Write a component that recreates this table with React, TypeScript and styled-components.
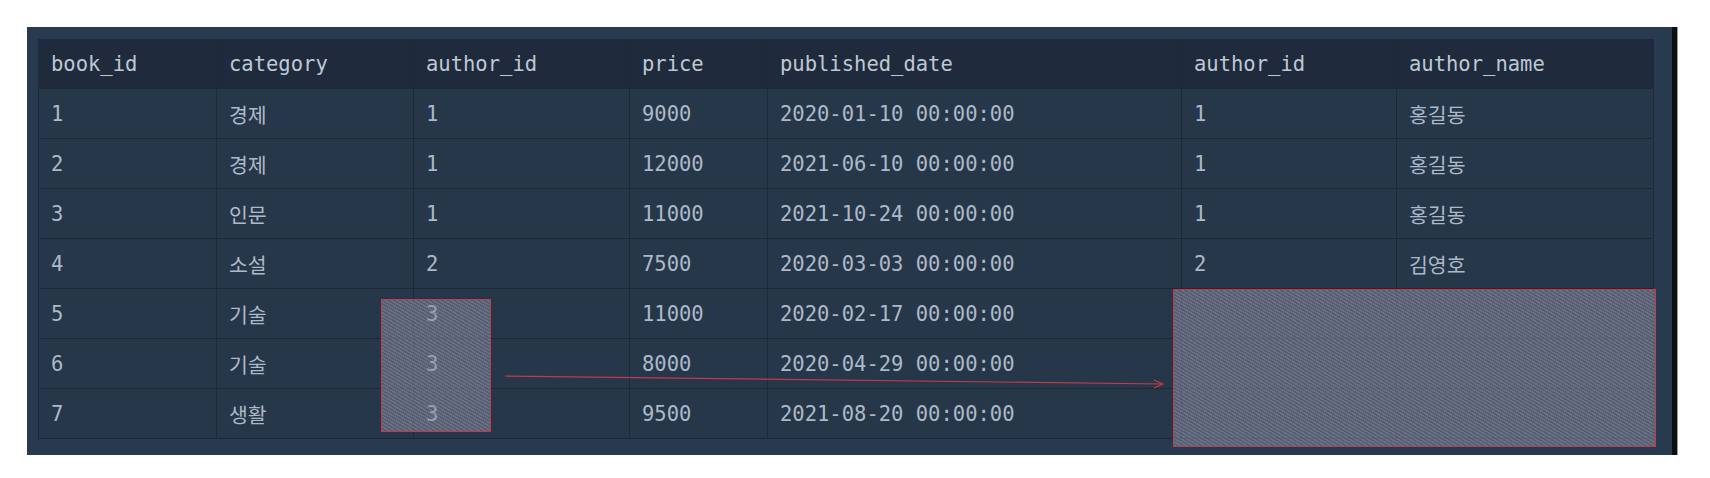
import React from 'react'
import styled, { createGlobalStyle } from 'styled-components'

const GlobalStyle = createGlobalStyle`
  html, body {
    margin: 0;
    background: #ffffff;
  }
`

const Columns = ['book_id', 'category', 'author_id', 'price', 'published_date', 'author_id', 'author_name']
const Widths = '178px 197px 216px 138px 414px 215px 257px'

const Rows = [
  ['1', '경제', '1', '9000', '2020-01-10 00:00:00', '1', '홍길동'],
  ['2', '경제', '1', '12000', '2021-06-10 00:00:00', '1', '홍길동'],
  ['3', '인문', '1', '11000', '2021-10-24 00:00:00', '1', '홍길동'],
  ['4', '소설', '2', '7500', '2020-03-03 00:00:00', '2', '김영호'],
  ['5', '기술', '3', '11000', '2020-02-17 00:00:00', '', ''],
  ['6', '기술', '3', '8000', '2020-04-29 00:00:00', '', ''],
  ['7', '생활', '3', '9500', '2021-08-20 00:00:00', '', ''],
]

const App = () => {
  return (
    <Page>
      <GlobalStyle />
      <Panel>
        <Table>
          <Row $head>
            {Columns.map((c, i) => (
              <Cell key={i} $head>{c}</Cell>
            ))}
          </Row>
          {Rows.map((r, i) => (
            <Row key={i}>
              {r.map((v, j) => (
                <Cell key={j}>{v}</Cell>
              ))}
            </Row>
          ))}
        </Table>

        <Highlight $left={354} $top={272} $width={110} $height={133} />
        <Highlight $left={1146} $top={262} $width={483} $height={158} />

        <Arrow width="670" height="20" viewBox="0 0 670 20">
          <line x1="1" y1="3" x2="658" y2="11" stroke="#c43a4c" strokeWidth="1.2" />
          <polyline points="650,7 659,11 650,15" fill="none" stroke="#c43a4c" strokeWidth="1.2" />
        </Arrow>
      </Panel>
    </Page>
  )
}

export default App

const Page = styled.div`
  width: 1710px;
  height: 478px;
  padding: 27px 0 0 27px;
  box-sizing: border-box;
`
const Panel = styled.div`
  position: relative;
  width: 1650px;
  height: 428px;
  box-sizing: border-box;
  padding: 12px 24px 0 11px;
  background: #283a4d;
  border-right: 5px solid #0e0f10;
  box-shadow: 1px 0 0 #9a9a9a;
`
const Table = styled.div`
  display: flex;
  flex-direction: column;
  width: 1615px;
  border-left: 1px solid #1e2a38;
  box-sizing: border-box;
`
const Row = styled.div<{ $head?: boolean }>`
  display: grid;
  grid-template-columns: ${Widths};
  height: 50px;
  box-sizing: border-box;
  border-bottom: 1px solid #1d2937;
  background: ${p => (p.$head ? '#1f2b3c' : '#26374a')};
`
const Cell = styled.div<{ $head?: boolean }>`
  display: flex;
  align-items: center;
  padding-left: 12px;
  border-right: 1px solid #1d2937;
  font-family: "DejaVu Sans Mono", "Noto Sans CJK KR", monospace;
  font-size: 20.5px;
  color: ${p => (p.$head ? '#bec8d4' : '#adb9c7')};
  white-space: nowrap;
  overflow: hidden;
`
const Highlight = styled.div<{ $left: number; $top: number; $width: number; $height: number }>`
  position: absolute;
  left: ${p => p.$left}px;
  top: ${p => p.$top}px;
  width: ${p => p.$width}px;
  height: ${p => p.$height}px;
  box-sizing: border-box;
  border: 1px solid #c43a4c;
  background: repeating-linear-gradient(
    30deg,
    rgba(150, 148, 168, 0.6) 0 1.5px,
    rgba(128, 126, 146, 0.55) 1.5px 3px
  );
`
const Arrow = styled.svg`
  position: absolute;
  left: 477px;
  top: 346px;
  overflow: visible;
`
